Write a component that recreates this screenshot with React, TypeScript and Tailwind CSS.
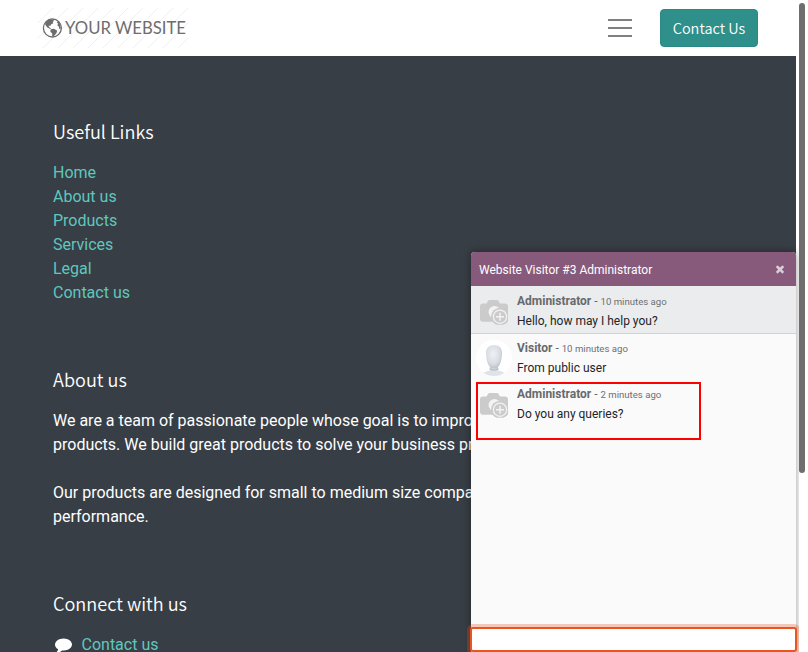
import type { ReactNode } from "react";

const links = ["Home", "About us", "Products", "Services", "Legal", "Contact us"];

const headingFont = "font-['Noto_Sans_CJK_SC',sans-serif]";
const footerHeading = "h-6 text-[18.1px] leading-[22px] font-[350]";

function Logo() {
  return (
    <svg width="150" height="40" viewBox="0 0 150 40" className="shrink-0">
      <defs>
        <pattern id="hatch" width="15" height="15" patternUnits="userSpaceOnUse">
          <path d="M-1 16L16 -1" stroke="#ececec" strokeWidth="0.8" />
        </pattern>
      </defs>
      <rect width="150" height="40" fill="url(#hatch)" />
      <circle cx="14.4" cy="20" r="9" fill="#fff" stroke="#6d6d6d" strokeWidth="1.3" />
      <path
        d="M7.4 14.4L10.5 11.8L15.2 11.7L16 13L14.6 14L15.4 15.2L13.2 16.2L12.2 18L10.6 17.6L11 19L13 20.4L12.3 20.9L9.4 19.4L7.2 16.8Z"
        fill="#6d6d6d"
      />
      <path d="M12.8 21.2L16 20.8L19.2 22.8L18.4 25.2L15.9 28L14.2 28.4L14.2 25.5L12.3 23.5Z" fill="#6d6d6d" />
      <path d="M19.4 13.2L21.2 14.6L22.8 18.5L22.4 21.4L21.2 20.7L21 18.8L19.4 17.6L20 15.6L18.8 14.4Z" fill="#6d6d6d" />
      <text
        x="27"
        y="25.7"
        textLength="121"
        lengthAdjust="spacingAndGlyphs"
        className="fill-[#6d6d6d] font-['Lato',sans-serif] text-[16.4px]"
      >
        YOUR WEBSITE
      </text>
    </svg>
  );
}

function CameraAvatar() {
  return (
    <svg width="36" height="36" viewBox="0 0 36 36" className="shrink-0">
      <path
        d="M7 9.5H10.5L12 7Q12.5 6 13.5 6H21Q22 6 22.5 7L24 9.5H29Q32 9.5 32 12.5V24.7Q32 27.7 29 27.7H7Q4 27.7 4 24.7V12.5Q4 9.5 7 9.5Z"
        fill="#cbcbcc"
      />
      <circle cx="18.5" cy="18" r="6" fill="#f3f3f4" />
      <circle cx="24" cy="22.7" r="9" fill="#cbcbcc" clipPath="inset(0 1px 1px 0)" />
      <circle cx="24" cy="22.7" r="7.2" fill="#f3f3f4" />
      <circle cx="24" cy="22.7" r="6" fill="#cbcbcc" />
      <path d="M20 22.7H28M24 18.7V26.7" stroke="#f3f3f4" strokeWidth="1.5" />
    </svg>
  );
}

function VisitorAvatar() {
  return (
    <svg width="36" height="36" viewBox="0 0 36 36" className="-mt-px shrink-0">
      <defs>
        <radialGradient id="face" cx="45%" cy="38%" r="65%">
          <stop offset="0" stopColor="#eff1f4" />
          <stop offset="0.65" stopColor="#d9dde2" />
          <stop offset="1" stopColor="#b6bdc6" />
        </radialGradient>
        <clipPath id="avatar-clip">
          <circle cx="18" cy="18" r="18" />
        </clipPath>
      </defs>
      <g clipPath="url(#avatar-clip)">
        <rect width="36" height="36" fill="#fff" />
        <path d="M3 36Q7 32 13.5 30.5L14.5 26H21.5L22.5 30.5Q29 32 33 36Z" fill="#dfe3e7" />
        <path d="M14 27Q18 32 22 27L22.5 29.5Q18 32 13.5 29.5Z" fill="#b8c0c8" />
        <path d="M18 5C23.5 5 26.3 8.5 26 14C25.7 20 24.5 24 22.5 26.5Q18 31 13.5 26.5C11.5 24 10.3 20 10 14C9.7 8.5 12.5 5 18 5Z" fill="url(#face)" />
      </g>
    </svg>
  );
}

interface MessageProps {
  author: string;
  time: string;
  text: string;
  avatar: ReactNode;
  className: string;
}

function Message({ author, time, text, avatar, className }: MessageProps) {
  return (
    <div className={`flex items-start gap-[5px] pl-[5px] ${className}`}>
      <div className="pt-[3px]">{avatar}</div>
      <div className="text-[12px] leading-5 text-[#212529]">
        <div className="h-5 whitespace-nowrap text-[#666a6d]">
          <span className="font-bold">{author}</span>
          <span> - </span>
          <span className="text-[9.6px] text-[#6c7075]">{time}</span>
        </div>
        <div className="whitespace-nowrap">{text}</div>
      </div>
    </div>
  );
}

function ChatWindow() {
  return (
    <section className="absolute top-[252px] left-[471px] flex h-[400px] w-[325px] flex-col rounded-t-[4px] bg-[#fafafa] shadow-[0_0_8px_rgba(0,0,0,0.4)] [clip-path:inset(-10px_-3px_0_-10px)]">
      <header className="flex h-[34px] shrink-0 items-center justify-between rounded-t-[4px] bg-[#875a7b] pr-[10px] pl-2 text-[12px] text-white">
        <span className="pt-[2px]">Website Visitor #3 Administrator</span>
        <svg width="12" height="12" viewBox="0 0 1792 1792" className="fill-white/70">
          <path d="M1490 1322q0 40-28 68l-136 136q-28 28-68 28t-68-28l-294-294-294 294q-28 28-68 28t-68-28l-136-136q-28-28-28-68t28-68l294-294-294-294q-28-28-28-68t28-68l136-136q28-28 68-28t68 28l294 294 294-294q28-28 68-28t68 28l136 136q28 28 28 68t-28 68l-294 294 294 294q28 28 28 68z" />
        </svg>
      </header>
      <div className="flex flex-1 flex-col">
        <Message
          className="h-12 border-b border-[#ced4da] bg-[#ebecee] pt-[5px]"
          author="Administrator"
          time="10 minutes ago"
          text="Hello, how may I help you?"
          avatar={<CameraAvatar />}
        />
        <Message className="h-[46px] pt-1" author="Visitor" time="10 minutes ago" text="From public user" avatar={<VisitorAvatar />} />
        <Message className="h-[46px] pt-1" author="Administrator" time="2 minutes ago" text="Do you any queries?" avatar={<CameraAvatar />} />
      </div>
      <div className="-mx-px h-[25px] shrink-0 rounded-[3px] border-2 border-[#e95420] bg-white shadow-[0_0_0_3px_rgba(233,84,32,0.3)]" />
      <div className="absolute top-[130px] left-[5px] h-[58px] w-[225px] border-2 border-[#ff0000]" />
    </section>
  );
}

export default function App() {
  return (
    <div className="relative flex h-[652px] w-[808px] overflow-hidden bg-white font-['Roboto',sans-serif] text-base text-white">
      <div className="flex w-[796px] flex-col overflow-hidden">
        <header className="flex h-14 shrink-0 items-center justify-between bg-white pr-[38px] pl-[38px]">
          <Logo />
          <div className="flex items-center gap-7">
            <div className="flex w-6 flex-col gap-[6px]">
              <div className="h-[2px] bg-[#808080]" />
              <div className="h-[2px] bg-[#808080]" />
              <div className="h-[2px] bg-[#808080]" />
            </div>
            <button className={`h-[38px] w-[98px] rounded-[4px] border border-[#2b8a87] bg-[#2f8f8b] pb-px text-[14.5px] leading-6 font-[350] ${headingFont}`}>
              Contact Us
            </button>
          </div>
        </header>
        <main className="flex-1 bg-[#383e45] pt-16 pl-[53px] leading-6">
          <h2 className={`${footerHeading} ${headingFont}`}>Useful Links</h2>
          <ul className="mt-[17px] text-[#5fc7bf]">
            {links.map((link) => (
              <li key={link}>{link}</li>
            ))}
          </ul>
          <h2 className={`mt-[63px] ${footerHeading} ${headingFont}`}>About us</h2>
          <div className="mt-[17px] flex w-[700px] flex-col gap-6">
            <p>
              We are a team of passionate people whose goal is to improve everyone's
              <br />
              products. We build great products to solve your business problems.
            </p>
            <p>
              Our products are designed for small to medium size companies
              <br />
              performance.
            </p>
          </div>
          <h2 className={`mt-[63px] ${footerHeading} ${headingFont}`}>Connect with us</h2>
          <div className="mt-[17px] flex items-center gap-[10.5px] pl-[2px] text-[#5fc7bf]">
            <svg width="17" height="17" viewBox="0 0 1792 1792" className="-mr-px -mt-px fill-white">
              <path d="M1792 896q0 174-120 321.5t-326 233-450 85.5q-70 0-145-8-198 175-460 242-49 14-114 22-17 2-30.5-9t-17.5-29v-1q-3-4-.5-12t2-10 4.5-9.5l6-9 7-8.5 8-9q7-8 31-34.5t34.5-38 31-39.5 32.5-51 27-59 26-76q-157-89-247.5-220t-90.5-281q0-130 71-248.5t191-204.5 286-136.5 348-50.5q244 0 450 85.5t326 233 120 321.5z" />
            </svg>
            <span>Contact us</span>
          </div>
        </main>
      </div>
      <div className="flex w-3 justify-center bg-white pt-[3px]">
        <div className="h-[470px] w-[6px] rounded-full bg-[#6e6e6e]" />
      </div>
      <ChatWindow />
    </div>
  );
}
